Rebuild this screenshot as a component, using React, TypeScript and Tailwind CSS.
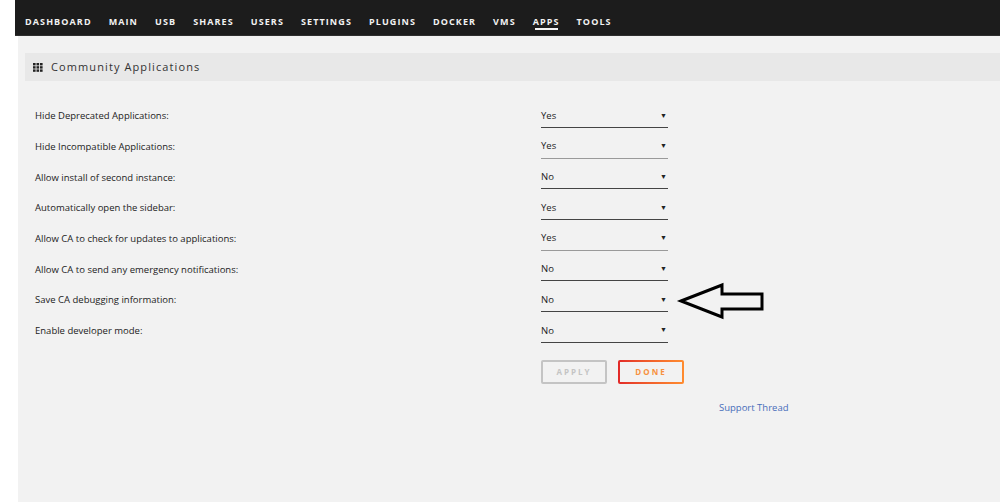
const NAV = ['DASHBOARD', 'MAIN', 'USB', 'SHARES', 'USERS', 'SETTINGS', 'PLUGINS', 'DOCKER', 'VMS', 'APPS', 'TOOLS'];

const SETTINGS = [
  { label: 'Hide Deprecated Applications:', value: 'Yes', dim: false },
  { label: 'Hide Incompatible Applications:', value: 'Yes', dim: true },
  { label: 'Allow install of second instance:', value: 'No', dim: false },
  { label: 'Automatically open the sidebar:', value: 'Yes', dim: false },
  { label: 'Allow CA to check for updates to applications:', value: 'Yes', dim: true },
  { label: 'Allow CA to send any emergency notifications:', value: 'No', dim: false },
  { label: 'Save CA debugging information:', value: 'No', dim: false },
  { label: 'Enable developer mode:', value: 'No', dim: false },
];

function GridIcon() {
  return (
    <svg width="10" height="9" viewBox="0 0 10 9" className="shrink-0">
      {[0, 3.5, 7].map((x) =>
        [0, 3.2, 6.4].map((y) => <rect key={`${x}-${y}`} x={x} y={y} width="2.6" height="2.4" fill="#222" />)
      )}
    </svg>
  );
}

export default function App() {
  return (
    <div className="w-[1000px] h-[502px] bg-white overflow-hidden relative font-['Open_Sans',sans-serif]">
      {/* top nav */}
      <div className="ml-[15px] h-[36px] bg-[#1c1c1c] border-b border-[#2e2e2e] flex items-center pl-[10px] gap-[17px]">
        {NAV.map((n) => (
          <div key={n} className="relative h-full flex items-center">
            <span className="text-[9px] font-bold tracking-[1.1px] text-[#f2f2f2] leading-none mt-[7px]">{n}</span>
            {n === 'APPS' && <div className="absolute left-[2px] right-[2px] bottom-[5px] h-[2px] bg-[#f2f2f2]" />}
          </div>
        ))}
      </div>

      {/* content */}
      <div className="ml-[18px] h-[466px] bg-[#f2f2f2] pt-[17px]">
        <div className="ml-[7px] h-[28px] bg-[#e8e8e8] flex items-center pl-[8px] gap-[8px]">
          <GridIcon />
          <span className="text-[11px] tracking-[1.1px] text-[#333]">Community Applications</span>
        </div>

        <div className="pt-[20px] pl-[17px]">
          {SETTINGS.map((s) => (
            <div key={s.label} className="h-[30.7px] flex items-center">
              <div className="w-[506px] text-[9.5px] text-[#222]">{s.label}</div>
              <div
                className={`w-[127px] h-[23px] flex items-center justify-between pr-[1px] border-b ${
                  s.dim ? 'border-[#9a9a9a]' : 'border-[#444]'
                }`}
              >
                <span className="text-[9.5px] text-[#222]">{s.value}</span>
                <span className="text-[7px] text-[#222]">▼</span>
              </div>
            </div>
          ))}

          <div className="flex gap-[11px] ml-[506px] mt-[13px]">
            <button className="w-[66px] h-[24px] rounded-[2px] border-2 border-[#c4c4c4] text-[8px] font-bold tracking-[2px] text-[#c4c4c4]">
              APPLY
            </button>
            <div className="w-[66px] h-[24px] rounded-[2px] p-[2px] bg-gradient-to-r from-[#e22828] to-[#ff8c2f]">
              <div className="w-full h-full bg-[#f2f2f2] flex items-center justify-center">
                <span className="text-[8px] font-bold tracking-[2px] text-[#f7913e]">DONE</span>
              </div>
            </div>
          </div>

          <div className="ml-[684px] mt-[17px] text-[9.5px] text-[#486dba]">Support Thread</div>
        </div>
      </div>

      {/* hand-drawn arrow annotation */}
      <svg className="absolute left-[676px] top-[282px]" width="92" height="40" viewBox="0 0 92 40">
        <path
          d="M5 19 L46 3 L46 12 L86 12 L86 27 L46 27 L46 35 Z"
          fill="none"
          stroke="#000"
          strokeWidth="3"
          strokeLinejoin="miter"
        />
      </svg>
    </div>
  );
}
